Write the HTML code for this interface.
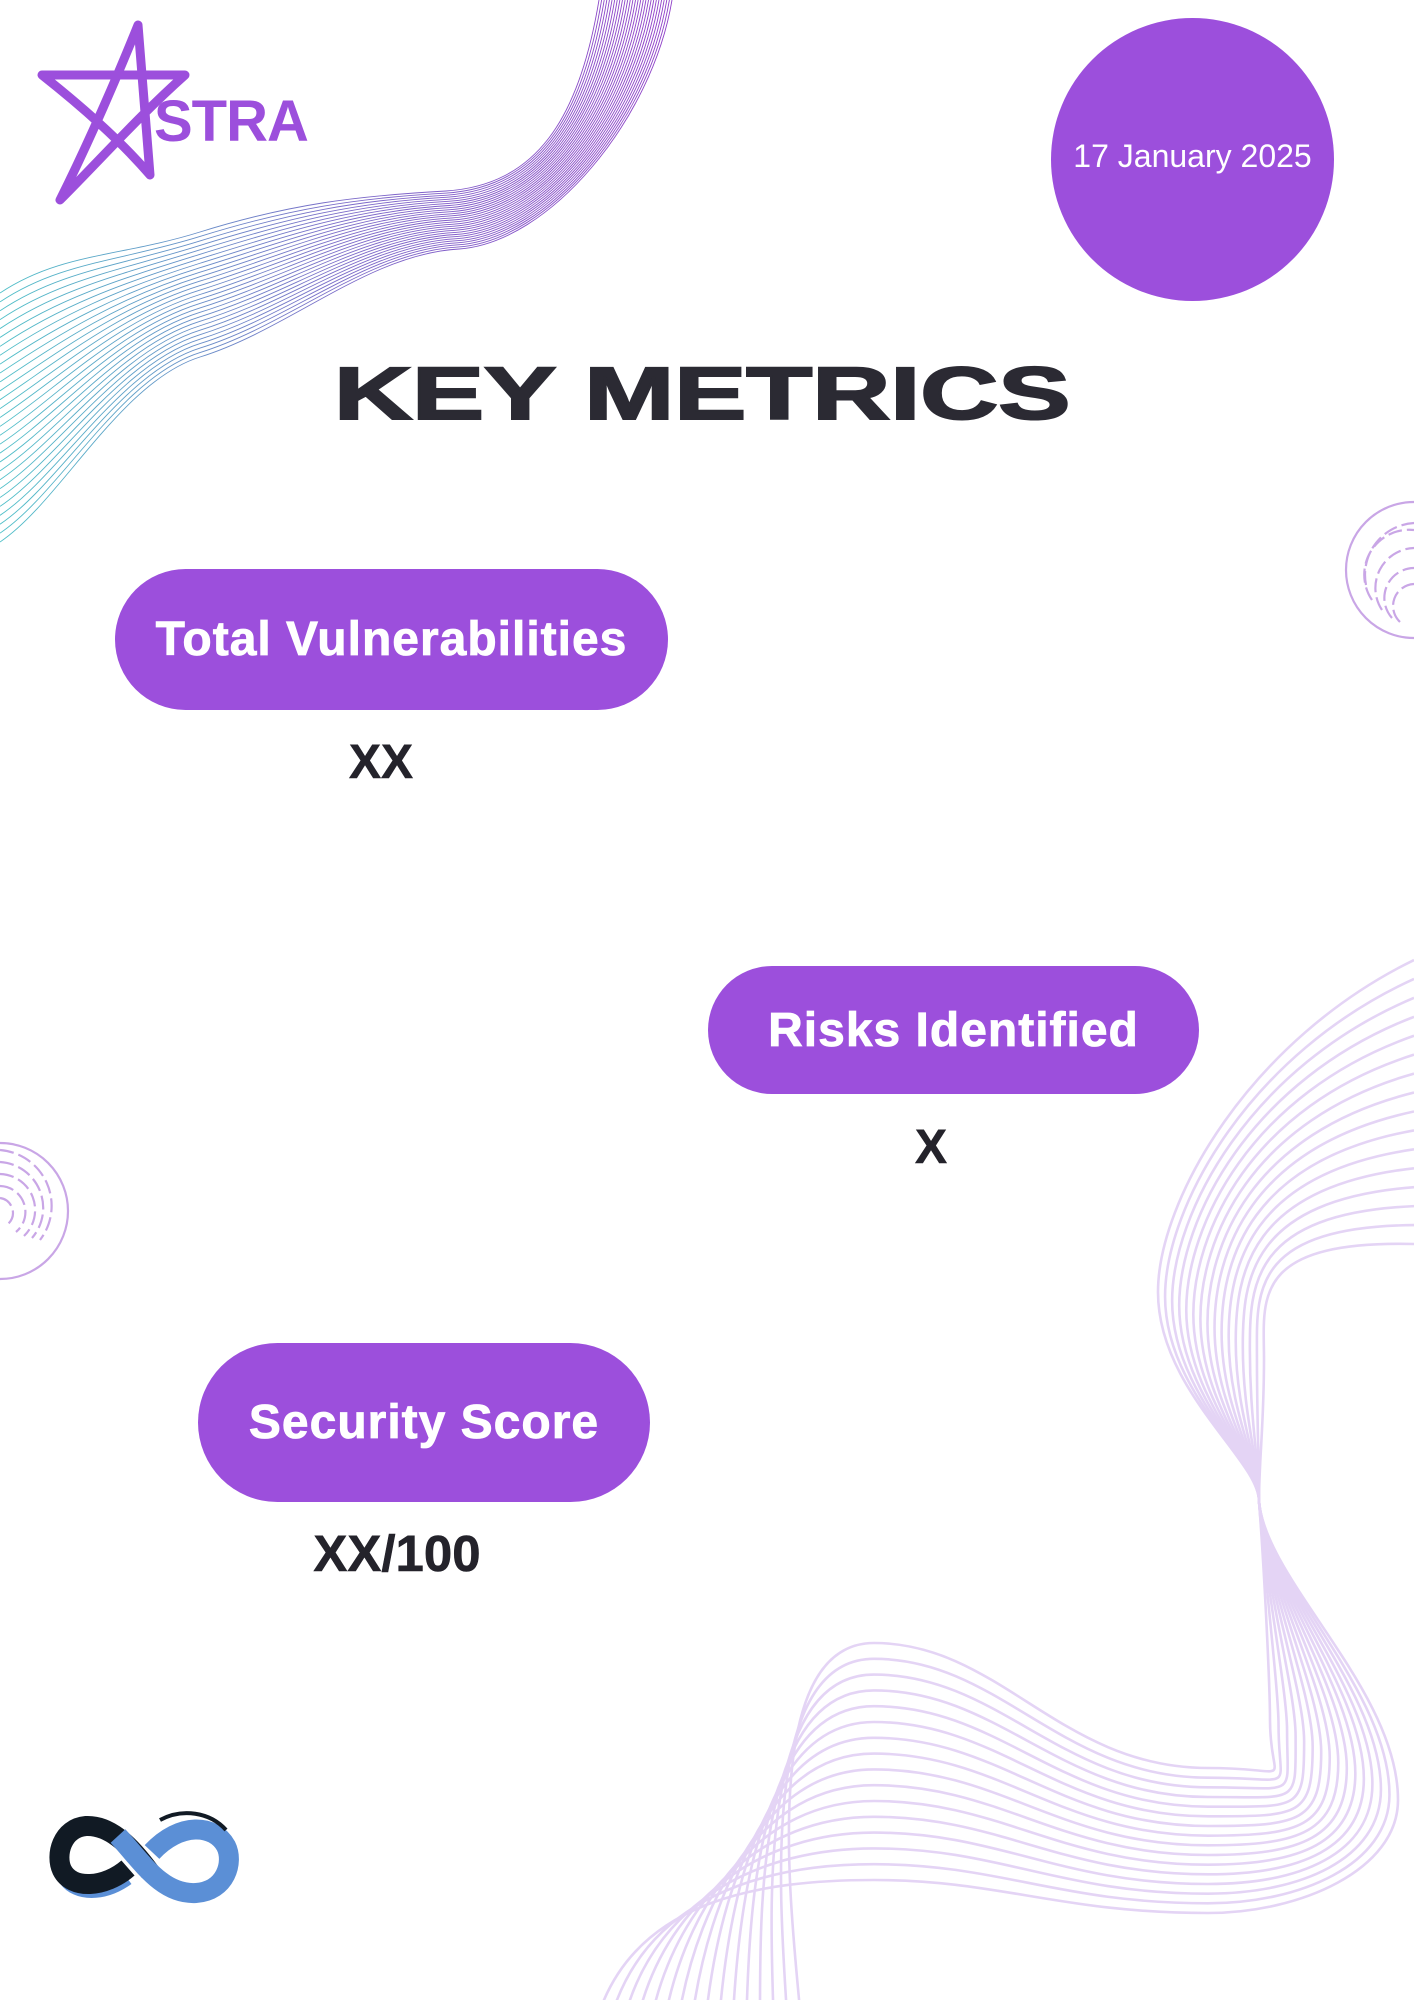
<!DOCTYPE html>
<html><head><meta charset="utf-8"><style>
html,body{margin:0;padding:0;background:#fff}
body{width:1414px;height:2000px;position:relative;overflow:hidden;font-family:"Liberation Sans",sans-serif}
.abs{position:absolute}
.pill{position:absolute;background:#9c4fdc;color:#fff;font-weight:bold;display:flex;align-items:center;justify-content:center;font-size:48px;letter-spacing:1px;-webkit-text-stroke:0.8px #fff}
.val{position:absolute;color:#24232b;font-weight:bold;font-size:48px;text-align:center;-webkit-text-stroke:0.6px #24232b}
</style></head><body>
<svg class="abs" style="left:0;top:0" width="1414" height="2000" viewBox="0 0 1414 2000">
<defs><linearGradient id="g1" x1="0" y1="0" x2="672" y2="0" gradientUnits="userSpaceOnUse"><stop offset="0" stop-color="#4fc0c8"/><stop offset="0.5" stop-color="#7a6cc8"/><stop offset="1" stop-color="#9040c8"/></linearGradient></defs>
<g id="tw" fill="none" stroke="url(#g1)" stroke-width="0.9"></g>
<g id="bw" fill="none" stroke="#e4d4f5" stroke-width="2.6"></g>
<g fill="none" stroke="#c9a6e6" stroke-width="2.2">
<circle cx="1414" cy="570" r="68"/>
<path d="M1372 600 a45 45 0 0 1 42 -70 M1382 610 a40 40 0 0 1 32 -62 M1392 618 a30 30 0 0 1 22 -50 M1400 622 a22 22 0 0 1 14 -38 M1366 585 a52 52 0 0 1 48 -62" stroke-dasharray="14 5"/>
<circle cx="0" cy="1211" r="68"/>
<path d="M0 1150 a56 56 0 0 1 40 90 M0 1162 a46 46 0 0 1 32 76 M0 1174 a36 36 0 0 1 24 62 M0 1186 a26 26 0 0 1 16 46 M0 1198 a15 15 0 0 1 8 26" stroke-dasharray="14 5"/>
</g>
<path d="M60 200 C90 140 120 70 138 25 C142 80 146 130 150 175 C120 140 80 105 42 75 C90 75 140 75 185 75 C140 115 100 160 60 200 Z" fill="none" stroke="#9c4fdc" stroke-width="9" stroke-linejoin="round"/>
<g fill="none">
<path d="M62 1882 C75 1900 105 1900 130 1882" stroke="#5b8fd6" stroke-width="5"/>
<path d="M150 1872 C128 1842 108 1825 86 1826 C62 1828 55 1855 62 1870 C72 1890 105 1888 128 1868" stroke="#111a24" stroke-width="20"/>
<path d="M118 1836 C142 1862 162 1895 196 1893 C226 1891 234 1862 226 1846 C214 1824 180 1822 152 1852" stroke="#5b8fd6" stroke-width="20"/>
<path d="M160 1820 C182 1808 210 1812 226 1830" stroke="#111a24" stroke-width="4"/>
</g>
</svg>
<div class="abs" style="left:154px;top:88px;font-size:58px;font-weight:bold;color:#9c4fdc;letter-spacing:-1px">STRA</div>
<div class="abs" style="left:1051px;top:18px;width:283px;height:283px;border-radius:50%;background:#9c4fdc"></div>
<div class="abs" style="left:1041px;top:138px;width:303px;text-align:center;color:#fff;font-size:32px">17 January 2025</div>
<div class="abs" style="left:334px;top:354px;width:734px;height:80px;overflow:visible"><span style="display:inline-block;font-size:74px;font-weight:900;color:#2b2a33;line-height:80px;transform-origin:0 0;transform:scaleX(1.46);white-space:nowrap;-webkit-text-stroke:2px #2b2a33">KEY METRICS</span></div>
<div class="pill" style="left:115px;top:569px;width:553px;height:141px;border-radius:71px">Total Vulnerabilities</div>
<div class="val" style="left:281px;top:735px;width:200px">XX</div>
<div class="pill" style="left:708px;top:966px;width:491px;height:128px;border-radius:64px">Risks Identified</div>
<div class="val" style="left:831px;top:1120px;width:200px">X</div>
<div class="pill" style="left:198px;top:1343px;width:452px;height:159px;border-radius:80px">Security Score</div>
<div class="val" style="left:287px;top:1524px;width:220px;font-size:51px">XX/100</div>
<script>
var ns="http://www.w3.org/2000/svg";
var tw=document.getElementById("tw"),bw=document.getElementById("bw");
for(var i=0;i<=28;i++){var t=i/28;
var y0=293+249*t,ya=232+125*t,xb=446+13*t,yb=191+58*t,xe=599+73*t;
var d="M0 "+y0+" C60 "+(y0-40)+" 120 "+(ya+25)+" 200 "+ya+" C290 "+(ya-28)+" "+(xb-90)+" "+(yb+5)+" "+xb+" "+yb+" C"+(xb+90)+" "+(yb-6)+" "+(xe-20)+" 120 "+xe+" 0";
var p=document.createElementNS(ns,"path");p.setAttribute("d",d);tw.appendChild(p);}
for(var i=0;i<16;i++){var t=i/15;
var x1=1158+106*t,y1=1292+67*t,xr=1398-128*t,yr=1800-80*t,yB=1913-145*t,yc=1880-237*t;
var d="M1414 "+(960+284*t)+" C1250 "+(1040+200*t)+" "+x1+" "+(1200+100*t)+" "+x1+" "+y1+
" C"+x1+" "+(1390+35*t)+" 1259 1460 1259 1501 C1265 1580 "+xr+" 1690 "+xr+" "+yr+
" C"+xr+" "+(yr+70)+" 1300 "+yB+" 1208 "+yB+" C1060 "+yB+" 1000 "+yc+" 874 "+yc+
" C760 "+yc+" "+(640+150*t)+" 1900 "+(600+200*t)+" 2010";
var p=document.createElementNS(ns,"path");p.setAttribute("d",d);bw.appendChild(p);}
</script>
</body></html>
